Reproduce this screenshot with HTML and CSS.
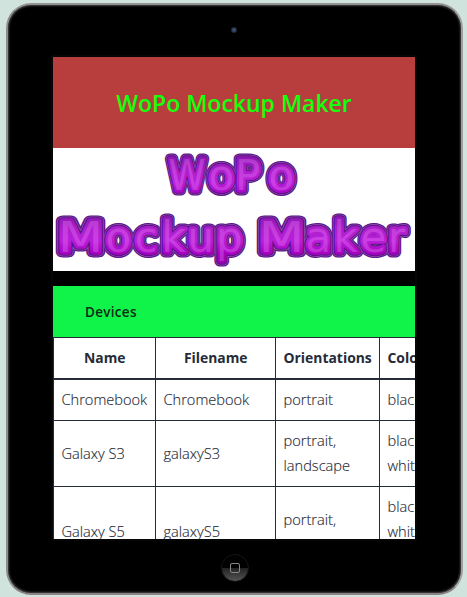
FILE: index.html
```html
<!DOCTYPE html>
<html lang="en">
<head>
<meta charset="utf-8">
<title>WoPo Mockup Maker</title>
<link rel="stylesheet" href="styles.css">
</head>
<body>
<div class="tablet">
  <div class="bezel-top"><span class="camera"></span></div>
  <main class="screen">
    <header class="header"><h1>WoPo Mockup Maker</h1></header>
    <svg class="logo" viewBox="53 148 362 123" role="img">
      <defs>
        <linearGradient id="body" gradientUnits="userSpaceOnUse" x1="0" y1="154" x2="0" y2="212" spreadMethod="repeat">
          <stop offset="0" stop-color="#8414ac"/>
          <stop offset=".3" stop-color="#ae1fcc"/>
          <stop offset=".5" stop-color="#b81fd8"/>
          <stop offset=".72" stop-color="#a400c0"/>
          <stop offset="1" stop-color="#8a08aa"/>
        </linearGradient>
        <g id="words">
          <text y="190"><tspan x="168.500" textLength="37" lengthAdjust="spacingAndGlyphs">W</tspan><tspan x="208.500">o</tspan><tspan x="235">P</tspan><tspan x="268.500">o</tspan></text>
          <text y="252"><tspan x="57.500" textLength="46" lengthAdjust="spacingAndGlyphs">M</tspan><tspan x="105.500 134.500 161.500 187.500 216">ockup</tspan></text>
          <text y="252"><tspan x="258.500" textLength="46" lengthAdjust="spacingAndGlyphs">M</tspan><tspan x="305.500 333.500 360.500 388">aker</tspan></text>
        </g>
      </defs>
      <use href="#words" class="logo-rim"/>
      <use href="#words" class="logo-edge"/>
      <use href="#words" class="logo-ring"/>
      <use href="#words" class="logo-body"/>
      <use href="#words" class="logo-shine"/>
    </svg>
    <section class="devices">
      <h2>Devices</h2>
      <table>
        <colgroup><col class="c-name"><col class="c-file"><col class="c-orient"><col class="c-color"></colgroup>
        <thead><tr><th><span class="t-name">Name</span></th><th><span class="t-file">Filename</span></th><th>Orientations</th><th>Colors</th></tr></thead>
        <tbody>
          <tr class="one"><td>Chromebook</td><td>Chromebook</td><td>portrait</td><td>black</td></tr>
          <tr class="two"><td>Galaxy S3</td><td>galaxyS3</td><td>portrait,<br>landscape</td><td>black,<br>white</td></tr>
          <tr class="three"><td>Galaxy S5</td><td>galaxyS5</td><td>portrait,<br>landscape</td><td>black,<br>white,<br>gold</td></tr>
        </tbody>
      </table>
    </section>
  </main>
  <div class="bezel-bottom"><span class="home"><i></i></span></div>
</div>
</body>
</html>
```
FILE: styles.css
```css
* { box-sizing: border-box; }
body {
  margin: 0;
  height: 597px;
  padding: 3px 4px 2px 6px;
  overflow: hidden;
  background: #d0e4dd;
  font-family: "Open Sans", "Noto Sans", sans-serif;
}
.tablet {
  width: 457px;
  height: 592px;
  border: 2px solid #8f8f8f;
  border-color: #929292 #a0a0a0 #8c8284 #8c8c8c;
  border-radius: 25px;
  background: #000;
  box-shadow: inset 0 0 2px 1px #444;
  display: flex;
  flex-direction: column;
  align-items: center;
}
.bezel-top {
  height: 52px;
  flex: none;
  padding: 22px 2px 0 0;
}
.camera {
  display: block;
  width: 6px;
  height: 6px;
  border-radius: 50%;
  background: radial-gradient(#3a5077 0 25%, #202633 60%, #333);
}
.screen {
  width: 362px;
  height: 482px;
  flex: none;
  overflow: hidden;
  background: #000;
  box-shadow: 0 0 0 2px #060606;
  margin-right: 1px;
}
.header {
  height: 91px;
  display: flex;
  align-items: center;
  justify-content: center;
  background: #b83e3d;
}
h1 {
  margin: 0;
  font-size: 23px;
  font-weight: 600;
  line-height: 32px;
  white-space: nowrap;
  color: #16ff0b;
}
.logo {
  display: block;
  width: 362px;
  height: 123px;
  background: #fff;
  font: 400 42px "DejaVu Sans", sans-serif;
  stroke-linejoin: round;
  stroke-linecap: round;
}
.logo-rim { fill: #60168c; stroke: #60168c; stroke-width: 11px; }
.logo-edge { fill: #9a62b5; stroke: #9a62b5; stroke-width: 8.500px; }
.logo-ring { fill: #591184; stroke: #591184; stroke-width: 7.500px; }
.logo-body { fill: url(#body); stroke: url(#body); stroke-width: 5.400px; }
.logo-shine { fill: #ee7afa; opacity: .35; }
.devices {
  margin-top: 15px;
  height: 253px;
  background: #fff;
}
h2 {
  margin: 0;
  height: 51px;
  padding: 1px 0 0 32px;
  background: #10f348;
  color: #0b2b14;
  font-size: 13.500px;
  font-weight: 600;
  line-height: 51px;
  letter-spacing: .3px;
}
table {
  width: 431px;
  table-layout: fixed;
  border-collapse: collapse;
  color: #252b38;
  font-size: 14.600px;
  line-height: 25px;
  font-weight: 300;
}
.c-name { width: 102px; }
.c-file { width: 120px; }
.c-orient { width: 104px; }
.c-color { width: 105px; }
th, td {
  padding: 0 7px 0 7.500px;
  border: 1px solid #252b38;
  text-align: left;
  white-space: nowrap;
  -webkit-text-stroke: .15px #252b38;
}
th {
  height: 41px;
  border-bottom-width: 2px;
  font-weight: 700;
  font-size: 13.900px;
  -webkit-text-stroke: 0;
}
.t-name, .t-file { display: block; text-align: center; }
.one { height: 42px; }
.two { height: 66px; }
.two td { padding-bottom: 1px; }
.three { height: 90px; }
.bezel-bottom {
  padding-top: 15px;
}
.home {
  display: flex;
  align-items: center;
  justify-content: center;
  width: 28px;
  height: 28px;
  border-radius: 50%;
  border: 1px solid #151515;
  background: linear-gradient(#000 48%, #242424 52%, #555);
}
.home i {
  width: 10px;
  height: 10px;
  border: 1px solid #888;
  border-radius: 2px;
}
```
